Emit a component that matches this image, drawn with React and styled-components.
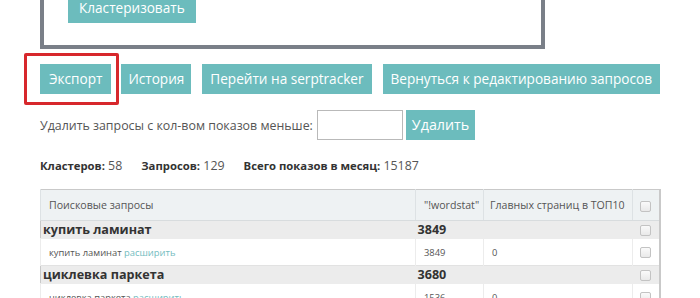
import styled, { createGlobalStyle } from "styled-components";

const GlobalStyle = createGlobalStyle`
    html, body {
        margin: 0;
        padding: 0;
        background: #ffffff;
        font-family: "Open Sans", "Liberation Sans", sans-serif;
        overflow: hidden;
    }
`;

const Page = styled.div`
    padding: 0 0 0 40px;
    margin-top: -42px;
    width: 660px;
`;

const Panel = styled.div`
    width: 449px;
    border: 4px solid #7a7f88;
    padding: 31px 24px 22px;
`;

const Button = styled.button`
    height: 30px;
    padding: 0 ${(p) => p.$pad || 8}px;
    border: none;
    border-radius: 0;
    background: #6cbcbd;
    color: #ffffff;
    font-family: "Open Sans", "Liberation Sans", sans-serif;
    font-size: ${(p) => p.$size || 13.6}px;
    line-height: 30px;
    white-space: nowrap;
    cursor: pointer;
`;

const Toolbar = styled.div`
    display: flex;
    margin-top: 15px;
    gap: 11px;
`;

const Highlighted = styled.div`
    position: relative;
    display: flex;
    margin-right: -1px;

    &::after {
        content: "";
        position: absolute;
        left: -16px;
        right: -8px;
        top: -11px;
        bottom: -11px;
        border: 3px solid #d7282c;
        border-radius: 2px;
        pointer-events: none;
    }
`;

const FilterRow = styled.div`
    display: flex;
    align-items: center;
    margin-top: 16px;
    gap: 3px;
    font-size: 12.4px;
    color: #555;
`;

const Label = styled.span`
    margin-right: 1px;
`;

const NumberInput = styled.input`
    box-sizing: border-box;
    width: 86px;
    height: 30px;
    border: 1px solid #b9b9b9;
    margin: 0;
`;

const Stats = styled.div`
    display: flex;
    gap: 19px;
    margin-top: 16px;
    height: 18px;
    align-items: center;
    font-size: 12.4px;
    color: #555;
`;

const Stat = styled.span`
    b {
        font-weight: 700;
        font-size: 11.3px;
        color: #333;
    }
`;

const Table = styled.table`
    margin-top: 15px;
    width: 620px;
    border-collapse: collapse;
    border: 1px solid #c9c9c9;
    border-right: 2px solid #c9c9c9;
    table-layout: fixed;
`;

const HeadCell = styled.th`
    height: 30px;
    padding: 0 ${(p) => p.$pad ?? 7}px;
    background: #eef2f3;
    border-left: 1px solid #dde2e4;
    border-bottom: 1px solid #d8dcde;
    font-size: 10.6px;
    font-weight: 400;
    color: #555;
    text-align: ${(p) => p.$align || "left"};
    white-space: nowrap;
`;

const GroupRow = styled.tr`
    background: #ececec;
    td {
        height: 17px;
        padding: 0 2px;
        font-size: 12.6px;
        font-weight: 700;
        color: #333;
        line-height: 17px;
        border-top: 1px solid #e2e2e2;
    }
`;

const DataRow = styled.tr`
    background: #ffffff;
    td {
        height: 26px;
        padding: 0 8px;
        font-size: 9.4px;
        color: #555;
        border-left: 1px solid #ececec;
        border-top: 1px solid #ececec;
    }
`;

const CheckCell = styled.td`
    && {
        padding: 0;
        text-align: center;
    }
`;

const Link = styled.a`
    color: #72bcc0;
    text-decoration: none;
`;

const Check = styled.input.attrs({ type: "checkbox" })`
    appearance: none;
    display: inline-block;
    width: 11px;
    height: 11px;
    margin: 0;
    vertical-align: middle;
    border: 1px solid #c3c3c3;
    border-radius: 2px;
    background: linear-gradient(#fafafa, #e9e9e9);
`;

const clusters = [
    { name: "купить ламинат", total: 3849, rows: [{ q: "купить ламинат", ws: 3849, top: 0 }] },
    { name: "циклевка паркета", total: 3680, rows: [{ q: "циклевка паркета", ws: 1536, top: 0 }] },
];

function App() {
    return (
        <>
            <GlobalStyle />
            <Page>
                <Panel>
                    <Button $pad={11}>Кластеризовать</Button>
                </Panel>

                <Toolbar>
                    <Highlighted>
                        <Button $pad={9}>Экспорт</Button>
                    </Highlighted>
                    <Button $pad={7}>История</Button>
                    <Button>Перейти на serptracker</Button>
                    <Button>Вернуться к редактированию запросов</Button>
                </Toolbar>

                <FilterRow>
                    <Label>Удалить запросы с кол-вом показов меньше:</Label>
                    <NumberInput type="text" />
                    <Button $size={14.3} $pad={6}>Удалить</Button>
                </FilterRow>

                <Stats>
                    <Stat><b>Кластеров:</b> 58</Stat>
                    <Stat><b>Запросов:</b> 129</Stat>
                    <Stat><b>Всего показов в месяц:</b> 15187</Stat>
                </Stats>

                <Table>
                    <colgroup>
                        <col style={{ width: 375 }} />
                        <col style={{ width: 68 }} />
                        <col style={{ width: 149 }} />
                        <col style={{ width: 27 }} />
                    </colgroup>
                    <thead>
                        <tr>
                            <HeadCell $pad={8}>Поисковые запросы</HeadCell>
                            <HeadCell $pad={8}>"!wordstat"</HeadCell>
                            <HeadCell $pad={6}>Главных страниц в ТОП10</HeadCell>
                            <HeadCell $align="center" $pad={0}><Check /></HeadCell>
                        </tr>
                    </thead>
                    <tbody>
                        {clusters.map((c) => (
                            <>
                                <GroupRow key={c.name}>
                                    <td>{c.name}</td>
                                    <td colSpan={2}>{c.total}</td>
                                    <CheckCell><Check /></CheckCell>
                                </GroupRow>
                                {c.rows.map((r) => (
                                    <DataRow key={c.name + r.q}>
                                        <td>{r.q} <Link href="#">расширить</Link></td>
                                        <td>{r.ws}</td>
                                        <td>{r.top}</td>
                                        <CheckCell><Check /></CheckCell>
                                    </DataRow>
                                ))}
                            </>
                        ))}
                    </tbody>
                </Table>
            </Page>
        </>
    );
}

export default App;
